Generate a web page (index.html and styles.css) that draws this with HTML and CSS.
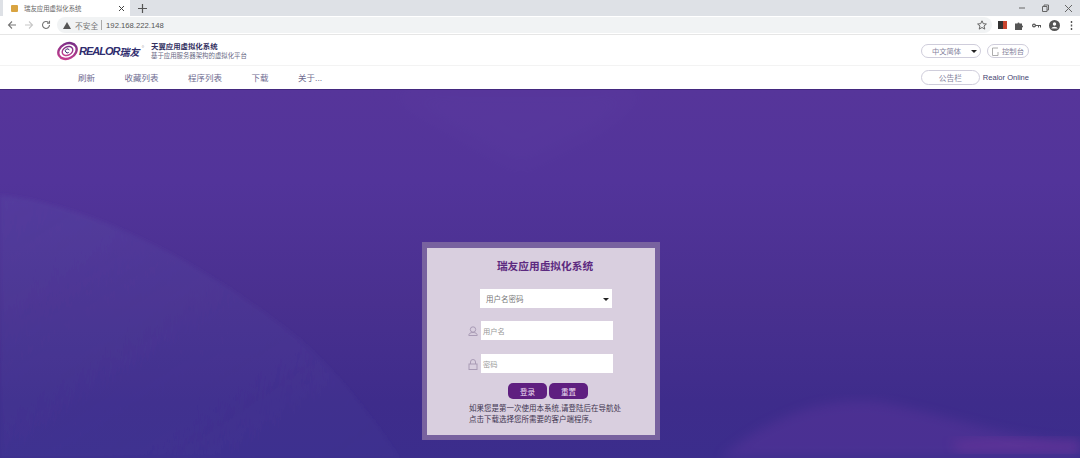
FILE: index.html
```html
<!DOCTYPE html>
<html lang="zh-CN">
<head>
    <meta charset="UTF-8">
    <title>瑞友应用虚拟化系统</title>
    <link rel="stylesheet" href="styles.css">
</head>
<body>
    <div class="tabstrip">
        <div class="tab">
            <span class="favicon"></span>
            <span class="tab-title">瑞友应用虚拟化系统</span>
            <svg class="tab-close" width="7" height="7" viewBox="0 0 7 7"><path d="M1 1l5 5M6 1l-5 5" stroke="#444" fill="none"/></svg>
        </div>
        <svg class="new-tab" width="9" height="9" viewBox="0 0 9 9"><path d="M4.500 0v9M0 4.500h9" stroke="#555" stroke-width="1.200" fill="none"/></svg>
        <div class="win-btns">
            <svg width="8" height="8" viewBox="0 0 8 8"><path d="M1 4h6" stroke="#666" fill="none"/></svg>
            <svg width="8" height="8" viewBox="0 0 8 8"><path d="M1.500 2.500h4.500v5h-4.500zM3 2.500v-1.500h4.500v5h-1.500" stroke="#666" fill="none"/></svg>
            <svg width="9" height="9" viewBox="0 0 9 9"><path d="M1 1l7 7M8 1l-7 7" stroke="#666" fill="none"/></svg>
        </div>
    </div>
    <div class="toolbar">
        <svg width="10" height="10" viewBox="0 0 10 10"><path d="M9 5H1.500M5 1.500L1.500 5 5 8.500" stroke="#777" stroke-width="1.100" fill="none"/></svg>
        <svg width="10" height="10" viewBox="0 0 10 10"><path d="M1 5h7.500M5 1.500L8.500 5 5 8.500" stroke="#c8c8c8" stroke-width="1.100" fill="none"/></svg>
        <svg width="10" height="10" viewBox="0 0 10 10"><path d="M8.500 5a3.500 3.500 0 1 1-1-2.500M8.500 .8v2.500H6" stroke="#777" stroke-width="1.100" fill="none"/></svg>
        <div class="omnibox">
            <svg width="8" height="7" viewBox="0 0 8 7"><path d="M4 0l4 7H0z" fill="#555"/></svg>
            <span class="insecure">不安全</span>
            <span class="sep"></span>
            <span class="url">192.168.222.148</span>
            <svg class="star" width="10" height="10" viewBox="0 0 10 10"><path d="M5 .8l1.300 2.900 3.100.3-2.400 2 .8 3.100L5 7.500 2.200 9.100 3 6 .6 4l3.100-.3z" stroke="#666" fill="none"/></svg>
        </div>
        <div class="ext-icons">
            <span class="ext-red"></span>
            <svg width="9" height="9" viewBox="0 0 9 9"><path d="M0 2.500h2.500a1 1 0 1 1 2 0H7V4.500a1 1 0 1 1 0 2V9H0z" fill="#555"/></svg>
            <svg width="9" height="5" viewBox="0 0 9 5"><circle cx="2" cy="2.500" r="1.400" stroke="#555" stroke-width="1.200" fill="none"/><path d="M3.500 2.500H9M6.500 2.500V4.500M8.500 2.500V4.500" stroke="#555" fill="none"/></svg>
            <svg class="avatar" width="11" height="11" viewBox="0 0 11 11"><circle cx="5.500" cy="5.500" r="5.500" fill="#555"/><circle cx="5.500" cy="4" r="1.700" fill="#fff"/><path d="M2.200 8.500a3.500 2.500 0 0 1 6.600 0z" fill="#fff"/></svg>
            <svg width="3" height="9" viewBox="0 0 3 9"><path d="M1.500 0v2M1.500 3.500v2M1.500 7v2" stroke="#555" stroke-width="1.400" fill="none"/></svg>
        </div>
    </div>

    <header class="site-head">
        <div class="logo">
            <svg class="logo-mark" width="21" height="20" viewBox="0 0 21 20">
                <defs>
                    <linearGradient id="ring" x1="0" y1="1" x2="1" y2="0">
                        <stop offset="0" stop-color="#d2408f"/>
                        <stop offset="1" stop-color="#6d2c86"/>
                    </linearGradient>
                </defs>
                <ellipse cx="10.500" cy="10" rx="9.600" ry="7.400" transform="rotate(-28 10.500 10)" fill="none" stroke="url(#ring)" stroke-width="2.400"/>
                <ellipse cx="10.500" cy="10" rx="5.600" ry="4.200" transform="rotate(-28 10.500 10)" fill="none" stroke="url(#ring)" stroke-width="1.400"/>
                <path d="M12.300 9.200a2 2 0 1 0-.6 2.200" fill="none" stroke="#3c2a6e" stroke-width="1"/>
            </svg>
            <span class="logo-text">REALOR</span><span class="logo-cn">瑞友</span>
            <span class="logo-reg">°</span>
        </div>
        <div class="slogan">
            <div class="slogan-main">天翼应用虚拟化系统</div>
            <div class="slogan-sub">基于应用服务器架构的虚拟化平台</div>
        </div>
        <div class="head-right">
            <div class="pill pill-lang">中文简体<span class="caret"></span></div>
            <div class="pill pill-console">
                <svg width="8" height="9" viewBox="0 0 8 9"><path d="M6 1H.5v7.500H6V5" stroke="#999" stroke-width=".8" fill="none"/></svg>
                控制台
            </div>
        </div>
    </header>
    <nav class="site-nav">
        <a class="nav-item">刷新</a>
        <a class="nav-item">收藏列表</a>
        <a class="nav-item">程序列表</a>
        <a class="nav-item">下载</a>
        <a class="nav-item">关于...</a>
        <div class="nav-right">
            <div class="pill pill-notice">公告栏</div>
            <span class="online">Realor Online</span>
        </div>
    </nav>

    <main class="stage">
        <svg class="waves" width="1080" height="368" viewBox="0 0 1080 368">
            <defs>
                <pattern id="hatch" width="6" height="4" patternUnits="userSpaceOnUse" patternTransform="rotate(28)">
                    <rect width="6" height="1.500" fill="#fff" opacity=".012"/>
                </pattern>
                <linearGradient id="wave-fade" x1="0" y1="0" x2="1" y2="1">
                    <stop offset="0" stop-color="#5c58ad" stop-opacity=".2"/>
                    <stop offset="1" stop-color="#4a4aa8" stop-opacity=".06"/>
                </linearGradient>
                <filter id="edge"><feGaussianBlur stdDeviation="2"/></filter>
                <filter id="soft"><feGaussianBlur stdDeviation="6"/></filter>
                <filter id="softer"><feGaussianBlur stdDeviation="12"/></filter>
            </defs>
            <g filter="url(#edge)">
                <path d="M0 105C90 115 200 170 300 250C340 285 375 330 400 368H0z" fill="url(#wave-fade)"/>
                <path d="M0 105C90 115 200 170 300 250C340 285 375 330 400 368H0z" fill="url(#hatch)"/>
            </g>
            <path d="M380 0H650L600 40L520 80L450 40z" fill="#6a50b0" opacity=".1" filter="url(#softer)"/>
            <path d="M720 368C770 325 830 305 880 312C950 325 1010 350 1080 352V368z" fill="#6f3aa6" opacity=".28" filter="url(#soft)"/>
            <path d="M950 352C1000 345 1040 350 1080 350V362H960z" fill="#84379f" opacity=".34" filter="url(#soft)"/>
        </svg>
        <div class="login-box">
            <div class="login-card">
                <h1 class="login-title">瑞友应用虚拟化系统</h1>
                <div class="field select-field">
                    <div class="login-select">用户名密码<span class="caret"></span></div>
                </div>
                <div class="field">
                    <svg class="field-icon" width="10" height="10" viewBox="0 0 10 10"><circle cx="5" cy="3.500" r="2.700" stroke="#a99bb5" fill="none"/><path d="M.8 9.500a4.200 3 0 0 1 8.400 0z" stroke="#a99bb5" fill="none"/></svg>
                    <div class="login-input">用户名</div>
                </div>
                <div class="field">
                    <svg class="field-icon" width="10" height="11" viewBox="0 0 10 11"><path d="M2.500 5V3a2.500 2.500 0 0 1 5 0v2" stroke="#a99bb5" fill="none"/><rect x="1" y="5" width="8" height="5.500" stroke="#a99bb5" fill="none"/></svg>
                    <div class="login-input">密码</div>
                </div>
                <div class="login-btns">
                    <button class="btn">登录</button>
                    <button class="btn">重置</button>
                </div>
                <p class="login-tip">如果您是第一次使用本系统,请登陆后在导航处<br>点击下载选择您所需要的客户端程序。</p>
            </div>
        </div>
    </main>
</body>
</html>
```

FILE: styles.css
```css
* { box-sizing: border-box; }
html, body { height: 100%; }
body { margin: 0; width: 1080px; height: 458px; overflow: hidden; display: flex; flex-direction: column; font-family: "Liberation Sans", "Noto Sans CJK SC", sans-serif; background: #fff; }

.tabstrip { height: 16px; flex: none; background: #dee1e6; display: flex; align-items: center; }
.tab { width: 127px; height: 16px; margin-left: 3px; padding: 0 5px 0 8px; background: #fff; display: flex; align-items: center; }
.favicon { width: 7px; height: 7px; background: #d9a441; border-radius: 1px; margin-right: 6px; }
.tab-title { font-size: 6.4px; color: #666; flex: 1; }
.new-tab { margin-left: 8px; }
.win-btns { margin-left: auto; display: flex; align-items: center; gap: 15px; padding-right: 7px; }

.toolbar { height: 19px; flex: none; background: #fff; display: flex; align-items: center; padding: 0 0 0 7px; gap: 7px; border-bottom: 1px solid #e6e6e6; }
.omnibox { flex: none; width: 935px; height: 16px; margin-left: -1px; background: #f1f3f4; border-radius: 8px; display: flex; align-items: center; padding: 0 5px 0 6px; font-size: 7.7px; color: #555; }
.insecure { margin-left: 4px; color: #777; }
.sep { width: 1px; height: 10px; background: #aaa; margin: 0 4px 0 3px; }
.url { color: #555; }
.star { margin-left: auto; }
.ext-icons { display: flex; align-items: center; gap: 8px; margin-left: -1px; }
.ext-red { width: 9px; height: 8px; background: linear-gradient(90deg, #333 50%, #c9442e 50%); }
.avatar { margin-right: 2px; }

.site-head { height: 31px; flex: none; padding: 2px 51px 0 56px; display: flex; align-items: center; border-bottom: 1px solid #f3f3f3; }
.logo { display: flex; align-items: center; width: 95px; }
.logo-mark { margin: 0 0 0 1px; flex: none; }
.logo-text { font-size: 11px; font-weight: bold; font-style: italic; color: #2f2d6e; letter-spacing: -1px; margin-left: 1px; }
.logo-cn { font-size: 10px; font-weight: bold; font-style: italic; color: #2f2d6e; white-space: nowrap; }
.logo-reg { font-size: 7px; color: #aaa; margin: -6px 0 0 2px; }
.slogan-main { font-size: 7.4px; font-weight: bold; color: #33305f; line-height: 10px; }
.slogan-sub { font-size: 6.4px; color: #6a6a85; line-height: 8px; }
.head-right { margin-left: auto; display: flex; align-items: center; gap: 6px; }

.pill { border: 1px solid #cfcddb; border-radius: 8px; font-size: 7.3px; color: #85839c; display: flex; align-items: center; justify-content: center; background: #fff; }
.pill-lang { width: 60px; height: 14px; position: relative; padding-right: 9px; }
.pill-console { width: 42px; height: 14px; gap: 2px; }
.pill-notice { width: 59px; height: 15px; font-size: 7.7px; }
.caret { width: 0; height: 0; border: 3px solid transparent; border-top-color: #222; border-bottom: 0; position: absolute; right: 3px; top: 50%; margin-top: -1px; }

.site-nav { height: 23px; flex: none; display: flex; align-items: center; padding: 0 51px 1px 78px; font-size: 8.5px; color: #6e6b90; }
.nav-item { margin-right: 29.5px; white-space: nowrap; }
.nav-right { margin-left: auto; display: flex; align-items: center; gap: 3px; }
.online { color: #45436f; font-size: 7.55px; }

.stage { flex: 1; position: relative; display: flex; justify-content: center; padding: 152px 0 0 2px; background: linear-gradient(180deg, #56359a 0%, #52349a 25%, #49308f 58%, #3e2c8b 85%, #3b2d8c 100%); border-top: 1px solid #43287f; }
.waves { position: absolute; left: 0; top: 0; }
.login-box { position: relative; width: 238px; height: 198px; padding: 6px 5px 5px; background: #78629f; }
.login-card { height: 100%; background: #d9cfdf; display: flex; flex-direction: column; align-items: center; padding: 11px 0 0 8px; }
.login-title { margin: 0 0 15px; font-size: 10.7px; line-height: 15px; font-weight: bold; color: #5d2a80; }
.field { width: 146px; height: 19px; margin: 0 0 14px -10px; display: flex; align-items: center; position: relative; justify-content: flex-end; flex: none; }
.select-field { margin-bottom: 13px; }
.login-select { width: 132px; height: 19px; background: #fff; font-size: 7.5px; color: #777; display: flex; align-items: center; padding-left: 6px; position: relative; margin-right: 1px; }
.login-input { width: 132px; height: 19px; background: #fff; font-size: 7.3px; color: #999; display: flex; align-items: center; padding-left: 2px; }
.field-icon { position: absolute; left: 1px; top: 5px; }
.login-btns { display: flex; gap: 2px; margin: -4px 0 0 6px; }
.btn { width: 39px; height: 16px; border: 0; border-radius: 5px; padding: 0; background: #5f1f80; color: #eedff2; font-size: 7.5px; font-family: inherit; }
.login-tip { margin: 4px 0 0; font-size: 7.5px; line-height: 11px; color: #3f3550; }
```
